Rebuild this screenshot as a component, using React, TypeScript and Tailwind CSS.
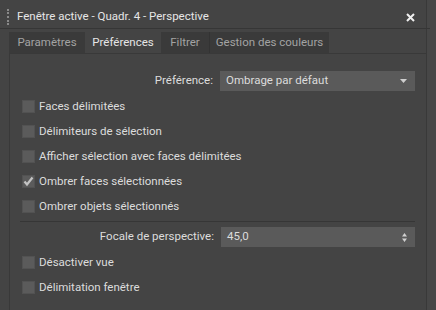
import React from 'react';

const ROWS_TOP = [
  { label: 'Faces délimitées', checked: false },
  { label: 'Délimiteurs de sélection', checked: false },
  { label: 'Afficher sélection avec faces délimitées', checked: false },
  { label: 'Ombrer faces sélectionnées', checked: true },
  { label: 'Ombrer objets sélectionnés', checked: false },
];

const ROWS_BOTTOM = [
  { label: 'Désactiver vue', checked: false },
  { label: 'Délimitation fenêtre', checked: false },
];

const Check: React.FC<{ label: string; checked: boolean }> = ({ label, checked }) => (
  <div className="flex items-center h-[25px]">
    <div className="w-[13px] h-[13px] bg-[#5b5b5b] border border-[#525252] flex items-center justify-center">
      {checked && (
        <svg width="11" height="11" viewBox="0 0 11 11">
          <path d="M1.5 5.5 L4 8.5 L9.5 1.5" stroke="#c4c4c4" strokeWidth="2.2" fill="none" />
        </svg>
      )}
    </div>
    <span className="ml-[4px] text-[#dcdcdc]">{label}</span>
  </div>
);

const tabs = [
  { label: 'Paramètres', w: 'w-[76px]' },
  { label: 'Préférences', w: 'w-[76px]' },
  { label: 'Filtrer', w: 'w-[48px]' },
  { label: 'Gestion des couleurs', w: 'w-[120px]' },
];

const App: React.FC = () => {
  return (
    <div
      className="w-[436px] h-[310px] bg-[#474747] overflow-hidden text-[11.5px] leading-none"
      style={{ fontFamily: 'Roboto, "Noto Sans", sans-serif' }}
    >
      <div className="w-[427px] h-full bg-[#444444] border-r border-[#393939] flex flex-col">
        <div className="h-[29px] pt-[6px] flex items-center border-b border-[#363636] mr-[-4px] pl-[7px] shrink-0">
          <div className="w-[2px] h-[16px] border-l-2 border-dotted border-[#8a8a8a]" />
          <span className="ml-[8px] text-[#e6e6e6]">Fenêtre active - Quadr. 4 - Perspective</span>
          <svg className="ml-auto mr-[15px]" width="9" height="9" viewBox="0 0 9 9">
            <path d="M1 1 L8 8 M8 1 L1 8" stroke="#f0f0f0" strokeWidth="2" />
          </svg>
        </div>

        <div className="flex flex-col pl-[9px] pt-[3px] flex-1">
          <div className="flex h-[21px]">
            {tabs.map((t, i) => (
              <div
                key={t.label}
                className={`flex items-center justify-center ${t.w} ${
                  i === 1
                    ? 'bg-[#444444] text-[#e6e6e6]'
                    : 'bg-[#3a3a3a] text-[#a3a3a3]'
                } ${i === 3 ? 'border-l border-[#333333]' : ''}`}
              >
                {t.label}
              </div>
            ))}
          </div>
          <div className="flex-1 border-t border-l border-[#393939] pl-[12px] pr-[11px] pt-[17px]">
            <div className="flex items-center justify-end h-[20px] mb-[3px]">
              <span className="text-[#dcdcdc] mr-[7px]">Préférence:</span>
              <div className="w-[195px] h-[20px] bg-[#5a5a5a] flex items-center pl-[6px] pr-[8px] text-[#dcdcdc]">
                Ombrage par défaut
                <svg className="ml-auto" width="7" height="4" viewBox="0 0 7 4">
                  <path d="M0 0 L7 0 L3.5 4 Z" fill="#cfcfcf" />
                </svg>
              </div>
            </div>
            {ROWS_TOP.map((r) => (
              <Check key={r.label} {...r} />
            ))}
            <div className="border-t border-[#363636] mt-[2px] mb-[5px] ml-[-2px]" />
            <div className="flex items-center justify-end h-[20px] mb-[3px]">
              <span className="text-[#dcdcdc] mr-[7px]">Focale de perspective:</span>
              <div className="w-[194px] h-[20px] bg-[#5a5a5a] flex items-center pl-[6px] pr-[8px] text-[#dcdcdc]">
                45,0
                <svg className="ml-auto" width="5" height="9" viewBox="0 0 5 9">
                  <path d="M0 3.5 L5 3.5 L2.5 0 Z M0 5.5 L5 5.5 L2.5 9 Z" fill="#cfcfcf" />
                </svg>
              </div>
            </div>
            {ROWS_BOTTOM.map((r) => (
              <Check key={r.label} {...r} />
            ))}
          </div>
        </div>
      </div>
    </div>
  );
};

export default App;
